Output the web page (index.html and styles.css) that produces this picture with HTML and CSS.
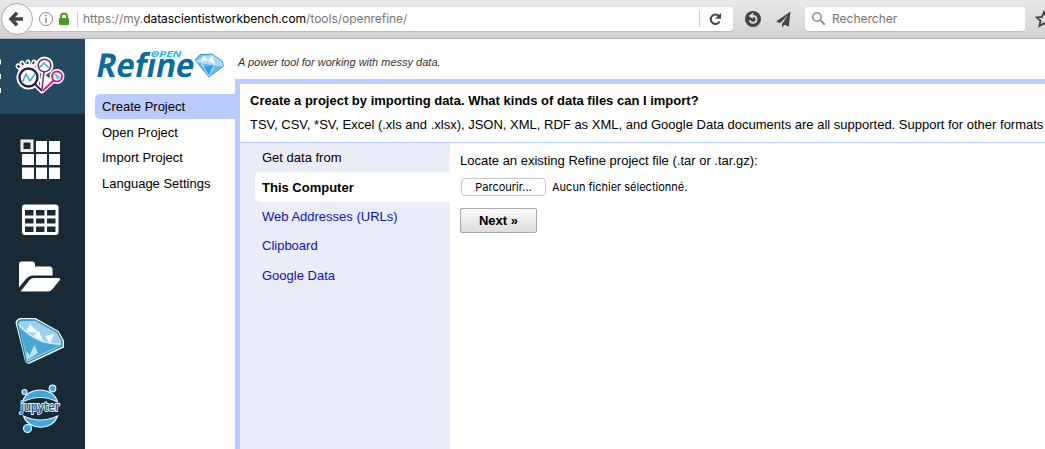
FILE: index.html
```html
<!DOCTYPE html>
<html lang="en">
<head>
<meta charset="utf-8">
<title>OpenRefine</title>
<link rel="stylesheet" href="styles.css">
</head>
<body>
<header class="toolbar">
  <svg class="back" viewBox="0 0 34 38"><circle cx="17" cy="19" r="15.500" fill="#fbfbfb" stroke="#aaa"/><path d="M23 19H12M17 12.800L11 19l6 6.200" fill="none" stroke="#444" stroke-width="3.500"/></svg>
  <div class="address">
    <svg class="site-icons" viewBox="34 7 44 24"><circle cx="46" cy="19" r="6.500" fill="none" stroke="#888"/><path d="M46 17.800v5M46 14.700v1.600" stroke="#888" stroke-width="1.500"/><path d="M61 18v-1.500a3 3 0 0 1 6 0V18" fill="none" stroke="#4c9a26" stroke-width="2"/><rect x="59" y="18" width="10" height="7" rx="1" fill="#4c9a26"/><path d="M77.500 11v16" stroke="#ccc"/></svg>
    <span class="url">https://my.<b>datascientistworkbench.com</b>/tools/openrefine/</span>
    <svg class="reload" viewBox="698 7 35 24"><path d="M699.500 11v16" stroke="#ccc"/><path d="M719 16.200a4.700 4.700 0 1 0 .6 5.300" fill="none" stroke="#444" stroke-width="2"/><path d="M721 13v5.800h-5.800z" fill="#444"/></svg>
  </div>
  <svg class="actions" viewBox="733 0 72 38"><circle cx="753" cy="19" r="8" fill="#444"/><path d="M749.800 20.200a3.400 3.400 0 1 0 3.200-4.200" fill="none" stroke="#ddd" stroke-width="1.800"/><path d="M748.500 16l4.700-3.400v6.400z" fill="#ddd"/><path d="M790.500 11.500L776 21.500l4.200 1.600 7.800-8.200-6 9v3.500l2.600-2.700 4.200 1.800z" fill="#444"/></svg>
  <div class="search">
    <svg class="glass" viewBox="0 0 16 16"><circle cx="6" cy="6" r="4.200" fill="none" stroke="#999" stroke-width="1.800"/><path d="M9.300 9.300l4.500 4.500" stroke="#999" stroke-width="2.200"/></svg>
    <span>Rechercher</span>
  </div>
  <svg class="star" viewBox="1025 0 20 38"><path d="M1044 12l2.200 4.800 5.200.6-3.900 3.500 1.100 5.100-4.600-2.600-4.600 2.600 1.100-5.100-3.900-3.500 5.200-.6z" fill="none" stroke="#444" stroke-width="1.800"/></svg>
</header>
<div class="page">
  <aside class="tools">
    <svg class="brand" viewBox="0 39 85 75">
      <path d="M0 59.500h1v5H0zM0 74h1v5H0zM0 88h1v5H0z" fill="#fff"/>
      <g fill="#fff" stroke="#fff" stroke-width="5" stroke-linecap="round" stroke-linejoin="round"><circle cx="28.500" cy="77.500" r="9.500"/><circle cx="44.500" cy="65.500" r="6.500"/><circle cx="57" cy="76.500" r="5"/><path d="M35 84l7 7 11-10M44 72l-2 18" fill="none"/><path d="M18 66l2 2M22 63l2 4M28 62v4M34 62l-1 4"/></g>
      <path d="M38 78l3 1 3-5 8 6-9 8z" fill="#fff"/>
      <g fill="#fff"><circle cx="28.500" cy="77.500" r="9" stroke="#321a57" stroke-width="2.400"/><circle cx="44.500" cy="65.500" r="6.300" stroke="#762980" stroke-width="1.600"/><circle cx="57" cy="76.500" r="5" stroke="#c1278a" stroke-width="2"/></g>
      <path d="M35 84l7 7M17.500 65.500l2 2M22 62.500l1 2.500M27.500 61.500v2.500M34 61.500l-1 2.500" stroke="#321a57" stroke-width="1.800"/>
      <path d="M44 72l-2 17" stroke="#762980" stroke-width="1.500"/><path d="M42.500 91l11-10.500" stroke="#c1278a" stroke-width="2"/>
      <path d="M22 83l4-9 4 7 5-7M39 68l5-5 5 5M54.500 74l4 3" fill="none" stroke="#38afe0" stroke-width="1.500"/><circle cx="58" cy="77.500" r="2" fill="#69c7e8"/>
    </svg>
    <svg class="grid-icon" viewBox="0 114 85 76"><g fill="#fff"><path d="M36 141h11v11H36zM49 141h11v11H49zM22 154h12v11H22zM36 154h11v11H36zM49 154h11v11H49zM22 167.500h12V179H22zM36 167.500h11V179H36zM49 167.500h11V179H49z"/></g><rect x="22" y="141" width="10" height="9.500" fill="#172a35" stroke="#f4efea" stroke-width="3"/></svg>
    <svg class="table-icon" viewBox="0 190 85 60"><rect x="22" y="204.500" width="36.500" height="30.500" rx="3" fill="#fff"/><path d="M25 210h8.500v5.500H25zM36 210h8.500v5.500H36zM47 210h8.500v5.500H47zM25 218.500h8.500v5H25zM36 218.500h8.500v5H36zM47 218.500h8.500v5H47zM25 226.500h8.500v5.500H25zM36 226.500h8.500v5.500H36zM47 226.500h8.500v5.500H47z" fill="#172a35"/></svg>
    <svg class="folder-icon" viewBox="0 250 85 55"><path d="M19 287.500v-23.500q0-2.500 2.500-2.500H32q3 0 3 3v2h14.500q3 0 3 3v6H33q-4 0-7 3.500zM20.500 291.500L29.500 280q2-2 4.500-2h24q3 0 1.800 2L53 288.500q-2 3-5 3z" fill="#fff"/></svg>
    <svg class="gem-icon" viewBox="0 305 85 70"><path d="M15.500 322.500q1-4 5-4.500h15l23 13 5.500 9.500v7L30 363.500q-4 1-5-2.500z" fill="#fff"/><path d="M17.500 323q1-3 4-3h13.500l22.500 12.500 4.500 8.500v5L28.500 362q-2 .5-2.500-2z" fill="#9bd2eb" stroke="#2688b6" stroke-width="1.300"/><path d="M19 327q16 16 42 18L28 360z" fill="#49a7d5"/><path d="M30 324l-4.500 8 13.500 1zM39 331l-6 5 11 7zM54 334l-9 2 5 8z" fill="#edf9fd"/><path d="M34.500 345l-5 10-3-4 .5 9 11-7z" fill="#b9e2f4"/><path d="M19 324q15 20 42 20" fill="none" stroke="#c9eafa" stroke-width="1.300"/></svg>
    <svg class="jupyter-icon" viewBox="0 375 85 74"><g fill="#40a8e1" stroke="#e8f5fb" stroke-width="1.200"><path d="M22.500 402c4-16 31-16 35 0q-17-9-35 0zM23.500 416q17 8 34 0c-5 15-29 15-34 0z"/><circle cx="24.500" cy="392" r="2.500"/><circle cx="52.500" cy="388.500" r="3.300"/><circle cx="27.500" cy="428.500" r="4"/></g><text x="20.500" y="411" textLength="39" lengthAdjust="spacingAndGlyphs" class="jupyter-name">jupyter</text></svg>
  </aside>
  <nav class="projects">
    <svg class="logo" viewBox="85 39 150 55"><text transform="translate(94.500 77) skewX(-11)" textLength="98" lengthAdjust="spacingAndGlyphs" class="refine">Refine</text><text x="150.500" y="56.500" textLength="31" lengthAdjust="spacingAndGlyphs" class="open">OPEN</text><path d="M195 60l5-5.500 12-.5 10 7 1.500 5L209 77z" fill="#6bbdf2" stroke="#4595c9"/><path d="M195.500 61l8-5 9-1 9 6 1.500 5-13-2z" fill="#a9dcfc"/><path d="M203 56l-2 6 7-2zM212 56l-4 5 7 3z" fill="#fff"/><path d="M196 61q10 3 27 5M201 62l8 14 6-12" fill="none" stroke="#b9e2fb"/><path d="M204 67l5 8 4-10z" fill="#389be3"/></svg>
    <a class="project selected">Create Project</a>
    <a class="project">Open Project</a>
    <a class="project">Import Project</a>
    <a class="project">Language Settings</a>
  </nav>
  <main class="content">
    <p class="tagline">A power tool for working with messy data.</p>
    <section class="panel">
      <div class="intro">
        <h1>Create a project by importing data. What kinds of data files can I import?</h1>
        <p class="formats">TSV, CSV, *SV, Excel (.xls and .xlsx), JSON, XML, RDF as XML, and Google Data documents are all supported. Support for other formats</p>
      </div>
      <div class="importer">
        <div class="sources">
          <div class="source heading">Get data from</div>
          <a class="source active">This Computer</a>
          <a class="source">Web Addresses (URLs)</a>
          <a class="source">Clipboard</a>
          <a class="source">Google Data</a>
        </div>
        <div class="upload">
          <p class="prompt">Locate an existing Refine project file (.tar or .tar.gz):</p>
          <div class="file-row"><button class="browse">Parcourir...</button><span class="file-state">Aucun fichier sélectionné.</span></div>
          <button class="next">Next »</button>
        </div>
      </div>
    </section>
  </main>
</div>
</body>
</html>
```
FILE: styles.css
```css
* { box-sizing: border-box; }
body { margin: 0; width: 1045px; height: 449px; overflow: hidden; background: #fff; color: #000; font: 13px/16px "Liberation Sans", Arial, sans-serif; }
svg { display: block; flex: none; }
p, h1 { margin: 0; }
button { padding: 0; color: #000; }
.toolbar { display: flex; align-items: center; height: 39px; padding-bottom: 1px; background: linear-gradient(#e9e9e9, #d2d2d2); border-bottom: 1px solid #aeaeae; overflow: hidden; }
.back { width: 34px; height: 38px; z-index: 1; }
.address { display: flex; align-items: center; width: 705px; height: 24px; margin-left: -6px; padding-left: 6px; background: #fff; border-radius: 0 3px 3px 0; box-shadow: 0 1px #bdbdbd; }
.site-icons { width: 44px; height: 24px; }
.url { width: 620px; padding-left: 5px; color: #777; font: 12px/16px Inter, sans-serif; letter-spacing: -.03px; white-space: nowrap; }
.url b { color: #000; font-weight: 400; }
.reload { width: 35px; height: 24px; margin-left: auto; }
.actions { width: 72px; height: 38px; }
.search { display: flex; align-items: center; gap: 5px; width: 220px; height: 24px; padding-left: 6px; background: #fff; border-radius: 3px; box-shadow: 0 1px #bdbdbd; color: #737373; font: 12px/16px Inter, sans-serif; }
.glass { width: 16px; height: 16px; }
.star { width: 20px; height: 38px; }
.page { display: flex; height: 410px; }
.tools { flex: none; width: 85px; background: #172a35; }
.tools svg { width: 85px; }
.tools .brand { height: 75px; background: #254a5f; }
.grid-icon { height: 76px; }
.table-icon { height: 60px; }
.folder-icon { height: 55px; }
.gem-icon { height: 70px; }
.jupyter-icon { height: 74px; }
.jupyter-name { font: 600 12.500px "Open Sans", sans-serif; fill: #245d83; stroke: #e8f5fb; stroke-width: 1.800px; paint-order: stroke; }
.projects { flex: none; width: 150px; }
.logo { width: 150px; height: 55px; }
.refine { font: 700 33px "Open Sans", sans-serif; fill: #086c9e; }
.open { font: italic 700 8px "Open Sans", sans-serif; fill: #16c4ef; stroke: #fff; stroke-width: 1.500px; paint-order: stroke; }
.project { display: block; height: 25px; margin: 0 0 .7px 10px; padding-left: 7px; line-height: 25px; }
.project.selected { background: #bacbff; border-radius: 5px 0 0 5px; }
.content { flex: none; width: 810px; }
.tagline { height: 40px; padding: 15px 0 0 3px; font-size: 11px; font-style: italic; color: #333; }
.panel { height: 370px; border: 5px solid #bacbff; border-width: 5px 0 0 5px; }
.intro { height: 59px; padding: 9px 0 0 10px; border-bottom: 1px solid #bacbff; white-space: nowrap; }
h1 { height: 24px; font-size: 13px; line-height: 16px; }
.importer { display: flex; height: 306px; }
.sources { width: 210px; padding-left: 15px; background: #eaecf8; }
.source { display: block; height: 29.300px; padding-left: 7px; line-height: 29px; color: #1111bd; }
.source.heading { color: #000; height: 29px; }
.source.active { height: 30px; background: #fff; border-radius: 5px 0 0 5px; color: #000; font-weight: 700; line-height: 31px; }
.upload { padding: 10px 0 0 10px; }
.file-row { display: flex; align-items: center; gap: 6px; height: 18px; margin: 9px 0 12px; font: 11px/16px Inter, sans-serif; }
.browse { width: 85px; height: 18px; margin-left: 1px; background: #fff; border: 1px solid #c6c6c6; border-radius: 4px; font: inherit; }
.next { width: 77px; height: 25px; background: linear-gradient(#f9f9f9, #ddd); border: 1px solid #aaa; border-radius: 2px; font: 700 13px/16px "Liberation Sans", Arial, sans-serif; }
```
